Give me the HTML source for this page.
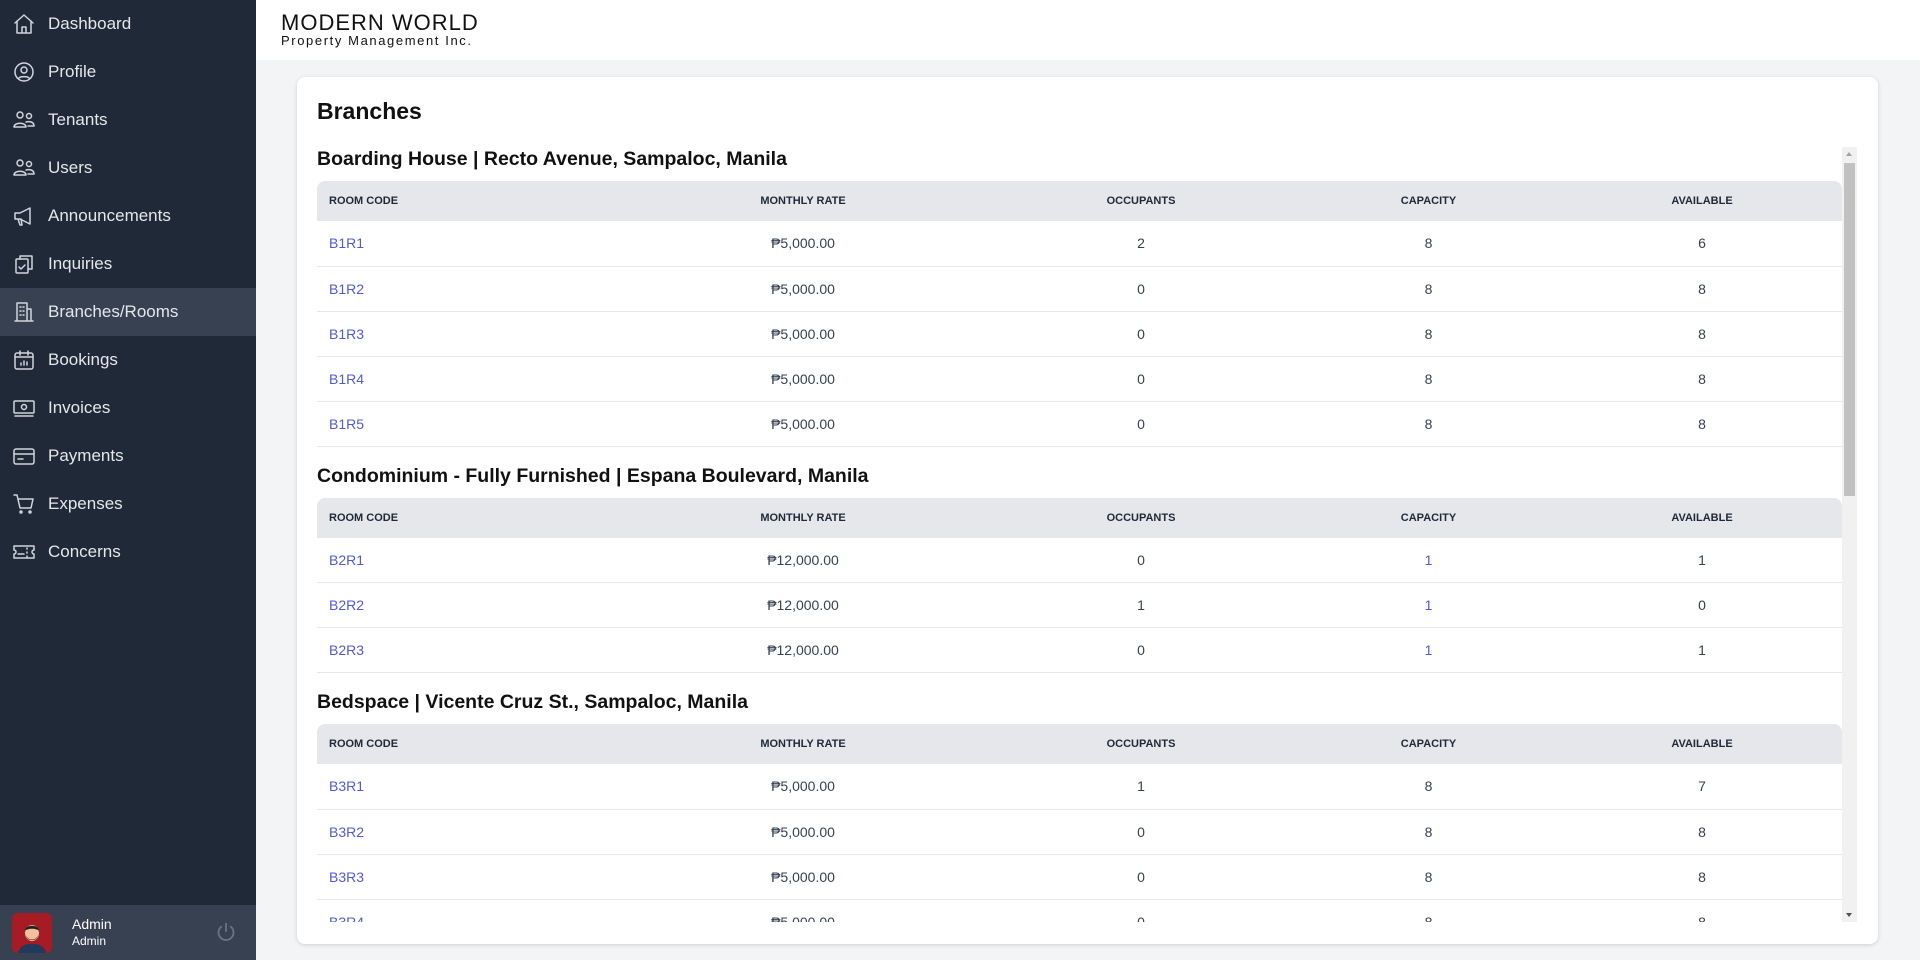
<!DOCTYPE html>
<html><head><meta charset="utf-8"><style>
*{box-sizing:border-box;margin:0;padding:0}
body{width:1920px;height:960px;overflow:hidden;background:#f3f4f6;font-family:"Liberation Sans",Arial,sans-serif;position:relative}
.side{position:absolute;left:0;top:0;width:256px;height:960px;background:#1f2937}
.nav{height:48px;display:flex;align-items:center;color:#e5e7eb;font-size:17px}
.nav svg{width:24px;height:24px;margin-left:12px;margin-right:12px;fill:none;stroke:#d1d5db;stroke-width:1.5;stroke-linecap:round;stroke-linejoin:round}
.nav.act{background:#374151}
.user{position:absolute;left:0;bottom:0;width:256px;height:55px;background:#374151}
.av{position:absolute;left:12px;top:8px;width:40px;height:40px;border-radius:6px;background:#a61b24;overflow:hidden}
.un{position:absolute;left:72px;top:11px;color:#fff;font-size:14px;line-height:17px}
.un small{display:block;font-size:12px}
.pw{position:absolute;left:216px;top:17px}
.top{position:absolute;left:256px;top:0;right:0;height:60px;background:#fff}
.logo1{position:absolute;left:25px;top:10px;font-size:22px;letter-spacing:1px;color:#111}
.logo2{position:absolute;left:25px;top:33px;font-size:13px;letter-spacing:1.6px;color:#111}
.card{position:absolute;left:297px;top:77px;width:1581px;height:867px;background:#fff;border-radius:8px;box-shadow:0 1px 4px rgba(0,0,0,.15)}
h1{position:absolute;left:20px;top:21px;font-size:23px;font-weight:bold;color:#111}
.scroll{position:absolute;left:20px;top:70px;width:1525px;height:775px;overflow:hidden}
.sb{position:absolute;left:1545px;top:70px;width:15px;height:775px;background:#f1f1f1}
.thumb{position:absolute;left:2px;top:16px;width:11px;height:333px;background:#c1c1c1}
.sb:before{content:"";position:absolute;left:4px;top:5px;border:3.5px solid transparent;border-bottom:4px solid #a3a3a3;border-top:0}
.sb:after{content:"";position:absolute;left:4px;bottom:5px;border:3.5px solid transparent;border-top:4px solid #505050;border-bottom:0}
h2{font-size:19.5px;font-weight:bold;color:#111;height:24px;line-height:24px;margin-bottom:10px}
h2.n{margin-top:17px}
table{width:1525px;border-collapse:collapse;font-size:14px;color:#374151}
th{background:#e5e7eb;height:40px;font-size:11px;font-weight:bold;color:#1f2937;text-transform:uppercase}
th:first-child{border-top-left-radius:8px;text-align:left;padding-left:12px}
th:last-child{border-top-right-radius:8px}
td{height:45px;border-bottom:1px solid #e5e7eb;text-align:center}
td:first-child{text-align:left;padding-left:12px;color:#4f5bd5}
</style></head><body>
<div class="side">
<div class="nav"><svg viewBox="0 0 24 24"><path d="M3 11l9-8 9 8M5 9v12h14V9M10 21v-6h4v6"/></svg>Dashboard</div>
<div class="nav"><svg viewBox="0 0 24 24"><circle cx="12" cy="12" r="9"/><circle cx="12" cy="10" r="3"/><path d="M6.5 18.5c1.5-2.5 9.5-2.5 11 0"/></svg>Profile</div>
<div class="nav"><svg viewBox="0 0 24 24"><circle cx="8" cy="7" r="3"/><circle cx="17" cy="8" r="2.5"/><path d="M2 19c0-5 12-5 12 0zM14 14c4-1 8 0 8 4h-6"/></svg>Tenants</div>
<div class="nav"><svg viewBox="0 0 24 24"><circle cx="8" cy="7" r="3"/><circle cx="17" cy="8" r="2.5"/><path d="M2 19c0-5 12-5 12 0zM14 14c4-1 8 0 8 4h-6"/></svg>Users</div>
<div class="nav"><svg viewBox="0 0 24 24"><path d="M3 9h5l10-5v16L8 15H3zM6 15l2 6h2l-1-6"/></svg>Announcements</div>
<div class="nav"><svg viewBox="0 0 24 24"><rect x="4" y="7" width="12" height="14" rx="1"/><path d="M8 7V4h12v13h-4M7 15l2 2 4-4"/></svg>Inquiries</div>
<div class="nav act"><svg viewBox="0 0 24 24"><path d="M3 21h18M5 21V3h10v18M15 9h4v12M8 7h1M11 7h1M8 11h1M11 11h1M8 15h1M11 15h1"/></svg>Branches/Rooms</div>
<div class="nav"><svg viewBox="0 0 24 24"><rect x="3" y="5" width="18" height="16" rx="2"/><path d="M3 9h18M8 3v4M16 3v4M9 17v-2M12 17v-4M15 17v-3"/></svg>Bookings</div>
<div class="nav"><svg viewBox="0 0 24 24"><rect x="2" y="5" width="20" height="12" rx="1"/><circle cx="12" cy="11" r="2.5"/><path d="M3 20h18"/></svg>Invoices</div>
<div class="nav"><svg viewBox="0 0 24 24"><rect x="2" y="5" width="20" height="15" rx="2"/><path d="M2 10h20M6 15h5"/></svg>Payments</div>
<div class="nav"><svg viewBox="0 0 24 24"><path d="M2 3h3l3 13h11l2-9H6"/><circle cx="9" cy="20" r="1"/><circle cx="18" cy="20" r="1"/></svg>Expenses</div>
<div class="nav"><svg viewBox="0 0 24 24"><path d="M2 6h20v4a2 2 0 000 4v4H2v-4a2 2 0 000-4zM6 14h6M15 8v1M15 12v1M15 16v1"/></svg>Concerns</div>
<div class="user"><div class="av"><svg width="40" height="40" viewBox="0 0 40 40"><path d="M6 40c2-8 8-9 14-9s12 1 14 9z" fill="#1f3a5a"/><ellipse cx="20" cy="20" rx="7" ry="8" fill="#f0c19a"/><path d="M13 18c0-7 14-7 14 0c-2-3-12-3-14 0z" fill="#222"/><path d="M14 22c2 6 10 6 12 0c-1 4-3 5-6 5s-5-1-6-5z" fill="#333"/></svg></div>
<div class="un">Admin<small>Admin</small></div>
<svg class="pw" width="20" height="20" viewBox="0 0 24 24" fill="none" stroke="#6b7280" stroke-width="2.2" stroke-linecap="round"><path d="M12 2v9M6.3 5.6a9 9 0 1011.4 0"/></svg></div>
</div>
<div class="top"><div class="logo1">MODERN WORLD</div><div class="logo2">Property Management Inc.</div></div>
<div class="card"><h1>Branches</h1>
<div class="scroll">
<h2>Boarding House | Recto Avenue, Sampaloc, Manila</h2>
<table><colgroup><col style="width:302px"><col style="width:368px"><col style="width:308px"><col style="width:267px"><col style="width:280px"></colgroup>
<tr><th>Room Code</th><th>Monthly Rate</th><th>Occupants</th><th>Capacity</th><th>Available</th></tr>
<tr><td>B1R1</td><td>₱5,000.00</td><td>2</td><td>8</td><td>6</td></tr>
<tr><td>B1R2</td><td>₱5,000.00</td><td>0</td><td>8</td><td>8</td></tr>
<tr><td>B1R3</td><td>₱5,000.00</td><td>0</td><td>8</td><td>8</td></tr>
<tr><td>B1R4</td><td>₱5,000.00</td><td>0</td><td>8</td><td>8</td></tr>
<tr><td>B1R5</td><td>₱5,000.00</td><td>0</td><td>8</td><td>8</td></tr></table>
<h2 class="n">Condominium - Fully Furnished | Espana Boulevard, Manila</h2>
<table><colgroup><col style="width:302px"><col style="width:368px"><col style="width:308px"><col style="width:267px"><col style="width:280px"></colgroup>
<tr><th>Room Code</th><th>Monthly Rate</th><th>Occupants</th><th>Capacity</th><th>Available</th></tr>
<tr><td>B2R1</td><td>₱12,000.00</td><td>0</td><td style="color:#4f5bd5">1</td><td>1</td></tr>
<tr><td>B2R2</td><td>₱12,000.00</td><td>1</td><td style="color:#4f5bd5">1</td><td>0</td></tr>
<tr><td>B2R3</td><td>₱12,000.00</td><td>0</td><td style="color:#4f5bd5">1</td><td>1</td></tr></table>
<h2 class="n">Bedspace | Vicente Cruz St., Sampaloc, Manila</h2>
<table><colgroup><col style="width:302px"><col style="width:368px"><col style="width:308px"><col style="width:267px"><col style="width:280px"></colgroup>
<tr><th>Room Code</th><th>Monthly Rate</th><th>Occupants</th><th>Capacity</th><th>Available</th></tr>
<tr><td>B3R1</td><td>₱5,000.00</td><td>1</td><td>8</td><td>7</td></tr>
<tr><td>B3R2</td><td>₱5,000.00</td><td>0</td><td>8</td><td>8</td></tr>
<tr><td>B3R3</td><td>₱5,000.00</td><td>0</td><td>8</td><td>8</td></tr>
<tr><td>B3R4</td><td>₱5,000.00</td><td>0</td><td>8</td><td>8</td></tr></table>
</div>
<div class="sb"><div class="thumb"></div></div>
</div>
</body></html>
